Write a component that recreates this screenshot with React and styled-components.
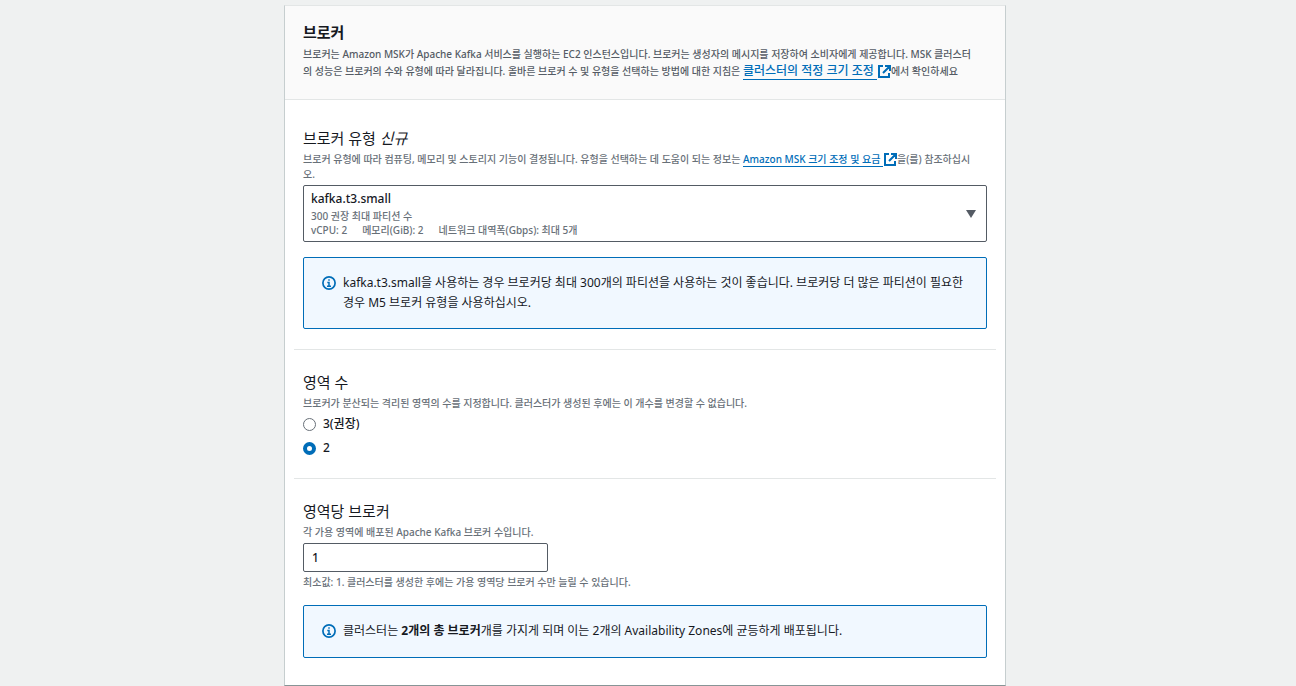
import React, { useState } from "react";
import styled, { createGlobalStyle } from "styled-components";

const GlobalStyle = createGlobalStyle`
  *, *::before, *::after { box-sizing: border-box; }
  body {
    margin: 0;
    background: #eff1f1;
    color: #16191f;
    font-family: "Noto Sans", "Noto Sans CJK KR", sans-serif;
    font-size: 12px;
    line-height: 20px;
    word-break: break-all;
  }
`;

const Page = styled.main`
  display: flex;
  justify-content: center;
  padding: 5px 6px 0 0;
`;

const Card = styled.section`
  flex: 0 1 722px;
  min-width: 0;
  background: #fff;
  border: 1px solid #c6cecf;
  border-top-color: #e3e6e6;
  border-bottom-color: #879596;
`;

const CardHeader = styled.header`
  padding: 15px 18px 19px;
  background: #fafafa;
  border-bottom: 1px solid #e3e6e6;
`;

const CardTitle = styled.h2`
  margin: 0 0 3px;
  font-size: 15px;
  line-height: 22px;
  font-weight: 700;
`;

const Intro = styled.p`
  margin: 0;
  color: #545b64;
  font-size: 10px;
  font-weight: 500;
  line-height: 17px;
`;

const CardBody = styled.div`
  padding: 6px 9px 7px;
`;

const Section = styled.section`
  padding: 21px 9px 20px;

  & + & {
    border-top: 1px solid #e3e6e6;
  }
`;

const SectionTitle = styled.h3`
  margin: 0 0 3px;
  font-size: 15px;
  line-height: 22px;
  font-weight: 400;
`;

const Hint = styled.p`
  margin: ${(p) => (p.$below ? "3px 0 0" : "0 0 3px")};
  color: #687078;
  font-size: 10px;
  font-weight: 500;
  line-height: 15px;
`;

const Link = styled.a`
  color: #006db8;
  font-size: ${(p) => (p.$large ? "12px" : "inherit")};
  font-weight: 500;
  line-height: 1;
  text-decoration: none;
  border-bottom: 1px solid #006db8;
`;

const LinkIcon = styled.svg`
  width: 14px;
  height: 14px;
  vertical-align: -3px;
  fill: none;
  stroke: #006db8;
  stroke-width: 2;
`;

const SelectBox = styled.div`
  display: grid;
  align-items: end;
`;

const Select = styled.select`
  grid-area: 1 / 1;
  width: 100%;
  height: 57px;
  padding: 2px 30px 31px 7px;
  appearance: none;
  background: #fff;
  border: 1px solid #545b64;
  border-radius: 2px;
  color: inherit;
  font: 500 12px/20px "Noto Sans", "Noto Sans CJK KR", sans-serif;
`;

const SelectDetails = styled.div`
  grid-area: 1 / 1;
  padding: 0 8px 5px;
  color: #687078;
  font-size: 10px;
  font-weight: 500;
  line-height: 14px;
  pointer-events: none;
`;

const Specs = styled.div`
  display: flex;
  flex-wrap: wrap;
  column-gap: 15px;
`;

const Caret = styled.svg`
  grid-area: 1 / 1;
  place-self: center end;
  width: 10px;
  height: 8px;
  margin-right: 11px;
  fill: #545b64;
  pointer-events: none;
`;

const AlertBox = styled.div`
  display: flex;
  gap: 7px;
  margin-top: 15px;
  padding: ${(p) => (p.$compact ? "15px 18px 16px" : "15px 18px")};
  background: #f1f8ff;
  border: 1px solid #006db8;
  border-radius: 2px;
`;

const AlertIcon = styled.svg`
  flex: none;
  width: 14px;
  height: 14px;
  margin-top: 3px;
  fill: none;
  stroke: #006db8;
`;

const AlertText = styled.p`
  margin: 0;
`;

const RadioGroup = styled.fieldset`
  display: flex;
  flex-direction: column;
  gap: 4px;
  margin: 0;
  padding: 0;
  border: 0;
`;

const RadioLabel = styled.label`
  display: flex;
  align-items: center;
  gap: 7px;
  font-weight: 500;
`;

const RadioInput = styled.input`
  width: 13px;
  height: 13px;
  margin: 0;
  appearance: none;
  background: #fff;
  border: 1px solid #687078;
  border-radius: 50%;

  &:checked {
    border: 4px solid #006db8;
  }
`;

const NumberField = styled.input`
  display: block;
  width: 245px;
  max-width: 100%;
  height: 29px;
  padding: 0 8px;
  border: 1px solid #545b64;
  border-radius: 2px;
  color: inherit;
  font: 500 12px/20px "Noto Sans", "Noto Sans CJK KR", sans-serif;
`;

function ExternalLink({ children, large }) {
  return (
    <>
      <Link href="#" $large={large}>{children}&nbsp;</Link>
      <LinkIcon viewBox="0 0 14 14" aria-hidden="true">
        <path d="M6 2H2v11h10V9M8 2h5v5M13 2L6 9" />
      </LinkIcon>
    </>
  );
}

function Alert({ children, compact }) {
  return (
    <AlertBox $compact={compact}>
      <AlertIcon viewBox="0 0 14 14" aria-hidden="true">
        <circle cx="7" cy="7" r="6.100" strokeWidth="1.700" />
        <path d="M7 3.200v1.600M5.300 6.500H7v3.700M5 10.200h4" strokeWidth="1.500" />
      </AlertIcon>
      <AlertText>{children}</AlertText>
    </AlertBox>
  );
}

export default function App() {
  const [zones, setZones] = useState("2");
  const [brokers, setBrokers] = useState("1");

  return (
    <>
      <GlobalStyle />
      <Page>
        <Card>
          <CardHeader>
            <CardTitle>브로커</CardTitle>
            <Intro>
              브로커는 Amazon MSK가 Apache Kafka 서비스를 실행하는 EC2 인스턴스입니다. 브로커는 생성자의 메시지를 저장하여 소비자에게 제공합니다. MSK 클러스터<br />의 성능은 브로커의 수와 유형에 따라 달라집니다. 올바른 브로커 수 및 유형을 선택하는 방법에 대한 지침은{" "}
              <ExternalLink large>클러스터의 적정 크기 조정</ExternalLink>에서 확인하세요
            </Intro>
          </CardHeader>
          <CardBody>
            <Section>
              <SectionTitle id="broker-type">브로커 유형 <em>신규</em></SectionTitle>
              <Hint>
                브로커 유형에 따라 컴퓨팅, 메모리 및 스토리지 기능이 결정됩니다. 유형을 선택하는 데 도움이 되는 정보는{" "}
                <ExternalLink>Amazon MSK 크기 조정 및 요금</ExternalLink>을(를) 참조하십시<br />오.
              </Hint>
              <SelectBox>
                <Select aria-labelledby="broker-type" aria-describedby="broker-specs">
                  <option>kafka.t3.small</option>
                </Select>
                <SelectDetails id="broker-specs">
                  <div>300 권장 최대 파티션 수</div>
                  <Specs>
                    <span>vCPU: 2</span>
                    <span>메모리(GiB): 2</span>
                    <span>네트워크 대역폭(Gbps): 최대 5개</span>
                  </Specs>
                </SelectDetails>
                <Caret viewBox="0 0 10 8" aria-hidden="true">
                  <path d="M0 0h10L5 8z" />
                </Caret>
              </SelectBox>
              <Alert>
                kafka.t3.small을 사용하는 경우 브로커당 최대 300개의 파티션을 사용하는 것이 좋습니다. 브로커당 더 많은 파티션이 필요한 경우 M5 브로커 유형을 사용하십시오.
              </Alert>
            </Section>
            <Section>
              <SectionTitle id="zone-count">영역 수</SectionTitle>
              <Hint>브로커가 분산되는 격리된 영역의 수를 지정합니다. 클러스터가 생성된 후에는 이 개수를 변경할 수 없습니다.</Hint>
              <RadioGroup aria-labelledby="zone-count">
                <RadioLabel>
                  <RadioInput type="radio" name="zones" checked={zones === "3"} onChange={() => setZones("3")} />
                  3(권장)
                </RadioLabel>
                <RadioLabel>
                  <RadioInput type="radio" name="zones" checked={zones === "2"} onChange={() => setZones("2")} />
                  2
                </RadioLabel>
              </RadioGroup>
            </Section>
            <Section>
              <SectionTitle><label htmlFor="brokers">영역당 브로커</label></SectionTitle>
              <Hint>각 가용 영역에 배포된 Apache Kafka 브로커 수입니다.</Hint>
              <NumberField id="brokers" inputMode="numeric" value={brokers} onChange={(e) => setBrokers(e.target.value)} />
              <Hint $below>최소값: 1. 클러스터를 생성한 후에는 가용 영역당 브로커 수만 늘릴 수 있습니다.</Hint>
              <Alert compact>
                클러스터는 <b>2개의 총 브로커</b>개를 가지게 되며 이는 2개의 Availability Zones에 균등하게 배포됩니다.
              </Alert>
            </Section>
          </CardBody>
        </Card>
      </Page>
    </>
  );
}
